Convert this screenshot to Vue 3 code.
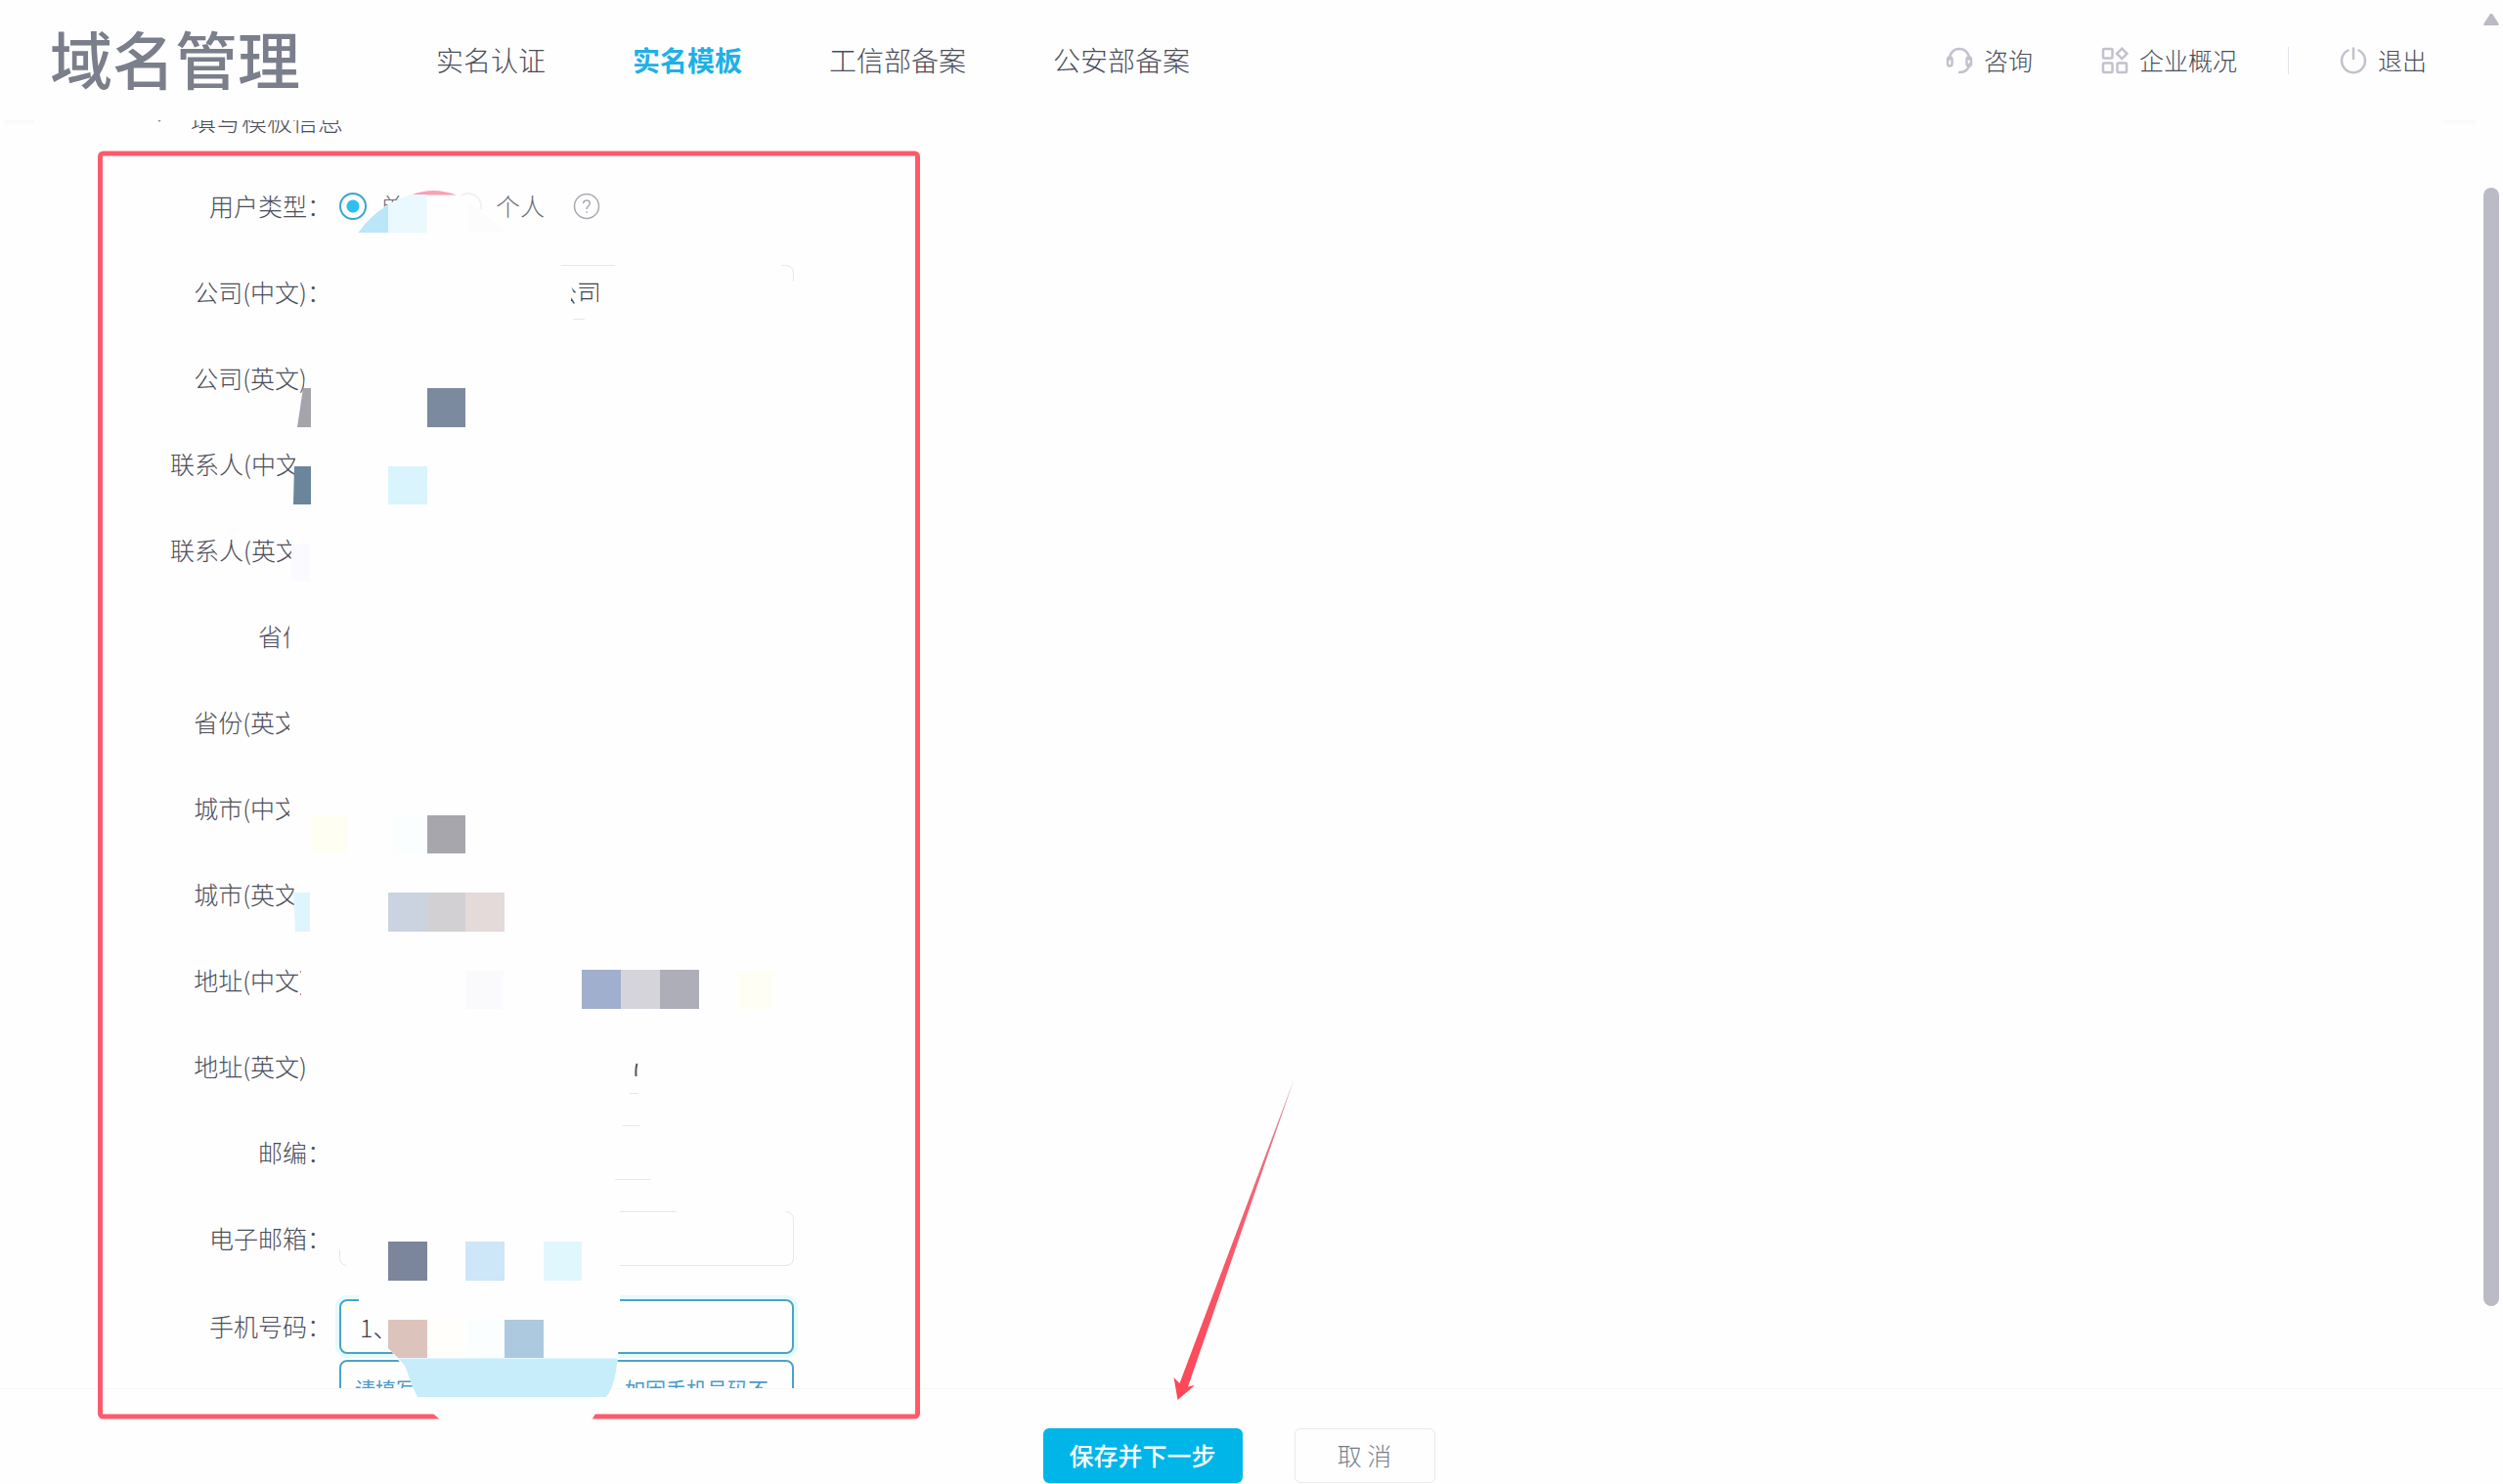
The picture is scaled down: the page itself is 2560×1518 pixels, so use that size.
<template>
  <div class="page">
    <!-- 顶部导航 -->
    <header class="header">
      <h1 class="logo">域名管理</h1>
      <nav class="nav">
        <a
          v-for="item in navs"
          :key="item"
          href="#"
          :class="['nav-item', { active: activeNav === item }]"
          @click.prevent="activeNav = item"
        >{{ item }}</a>
      </nav>
      <div class="tools">
        <a href="#" class="tool">
          <svg class="tool-icon" viewBox="0 0 28 28">
            <path d="M4 12.500C4 6 8.500 2 14 2s10 4 10 10.500M24.500 17.500C23.500 22.500 20 26 14 26" />
            <rect x="2" y="10.500" width="4.500" height="9" rx="2.250" />
            <rect x="21.500" y="10.500" width="4.500" height="9" rx="2.250" />
          </svg>
          <span>咨询</span>
        </a>
        <a href="#" class="tool">
          <svg class="tool-icon" viewBox="0 0 28 28">
            <rect x="2" y="2" width="9.500" height="9.500" rx="1" />
            <rect x="2" y="16.500" width="9.500" height="9.500" rx="1" />
            <rect x="16.500" y="16.500" width="9.500" height="9.500" rx="1" />
            <path d="M21.250 1.700l5.200 5.200-5.200 5.200-5.200-5.200z" />
          </svg>
          <span>企业概况</span>
        </a>
        <span class="divider"></span>
        <a href="#" class="tool">
          <svg class="tool-icon" viewBox="0 0 28 28">
            <path d="M14 1.500v10.500M8.500 3.500a12 12 0 1 0 11 0" />
          </svg>
          <span>退出</span>
        </a>
      </div>
    </header>

    <!-- 表单区域 -->
    <main class="content">
      <h2 class="section-title">
        <svg class="arrow-down" viewBox="0 0 10 6"><path d="M1 0h8L5 5z" /></svg>
        填写模板信息
      </h2>
      <form id="template-form" class="form" @submit.prevent>
        <div class="row">
          <span id="user-type" class="label">用户类型：</span>
          <div class="radios" role="radiogroup" aria-labelledby="user-type">
            <label class="radio">
              <input v-model="userType" type="radio" name="type" value="unit" />
              <span class="radio-text">单位</span>
            </label>
            <label class="radio">
              <input v-model="userType" type="radio" name="type" value="person" />
              <span class="radio-text">个人</span>
            </label>
            <svg class="help" viewBox="0 0 28 28">
              <circle cx="14" cy="14" r="12.500" />
              <path d="M10.700 11.300c0-2 1.400-3.300 3.300-3.300s3.300 1.300 3.300 3.100c0 2.600-3.300 2.900-3.300 5.900M14 19.200v1.600" />
            </svg>
          </div>
        </div>
        <div
          v-for="field in fields"
          :key="field.key"
          :class="['row', { 'row-focus': field.key === 'mobile' }]"
        >
          <label class="label" :for="field.key">{{ field.label }}：</label>
          <input
            :id="field.key"
            v-model="field.value"
            type="text"
            :class="['input', field.key]"
          />
        </div>
        <div class="tip">
          <span>请填写</span>
          <span>如因手机号码不</span>
        </div>
      </form>
    </main>

    <footer class="footer">
      <button type="submit" form="template-form" class="btn btn-primary">保存并下一步</button>
      <button type="button" class="btn btn-default">取 消</button>
    </footer>

    <!-- 滚动条 -->
    <div class="scrollbar">
      <svg class="scroll-up" viewBox="0 0 16 12"><path d="M8 0c1 0 1.500.5 2 1.500l5.500 8.500c.8 1.200 0 2-1 2h-13c-1 0-1.800-.8-1-2L6 1.500C6.500.5 7 0 8 0z" /></svg>
      <div class="scroll-thumb"></div>
    </div>

    <!-- 标注层：马赛克、红框、箭头 -->
    <svg class="marks" width="1600" height="1518" viewBox="0 0 1600 1518">
      <rect x="102.500" y="157" width="836" height="1292" rx="3" fill="none" stroke="#ff5a6c" stroke-width="5" />
      <path class="cover" fill-rule="evenodd" :d="coverPath" />
      <path d="M420 199.500Q443 190.500 467 199.500z" fill="#f7a3b3" />
      <path d="M366.500 238Q378 221 397 209.500V238z" fill="#bbe5f9" />
      <path d="M397 209.500Q408 203 420 199H436.500V238H397z" fill="#e9f9fe" />
      <path d="M478 206L493 218L515 234V238H478z" fill="#fcfcfc" />
      <polygon
        v-for="(block, i) in blocks"
        :key="i"
        :points="block.points"
        :fill="block.color"
      />
      <path d="M407 1389.500H631.500C630 1408 627 1420 620 1429H427Q420 1416 416 1402Q414 1395 407 1389.500z" fill="#c7edfb" />
      <path d="M651.500 1088Q650 1093 650.500 1101" fill="none" stroke="#555" stroke-width="2" />
      <path d="M1323.500 1104L1206.500 1415L1200.500 1409L1204.500 1432L1222 1417L1215 1418.500z" fill="url(#arrow-fill)" />
      <defs>
        <linearGradient id="arrow-fill" x1="0" y1="0" x2="0" y2="1">
          <stop offset="0" stop-color="#d98c9c" />
          <stop offset="0.4" stop-color="#f65f72" />
          <stop offset="1" stop-color="#ff4656" />
        </linearGradient>
      </defs>
    </svg>
  </div>
</template>

<script setup>
import { ref } from 'vue'

const navs = ['实名认证', '实名模板', '工信部备案', '公安部备案']
const activeNav = ref('实名模板')
const userType = ref('unit')

const fields = ref([
  { key: 'company', label: '公司(中文)', value: '公司' },
  { key: 'company-en', label: '公司(英文)', value: '' },
  { key: 'contact', label: '联系人(中文)', value: '' },
  { key: 'contact-en', label: '联系人(英文)', value: '' },
  { key: 'province', label: '省份', value: '' },
  { key: 'province-en', label: '省份(英文)', value: '' },
  { key: 'city', label: '城市(中文)', value: '' },
  { key: 'city-en', label: '城市(英文)', value: '' },
  { key: 'address', label: '地址(中文)', value: '' },
  { key: 'address-en', label: '地址(英文)', value: '' },
  { key: 'postcode', label: '邮编', value: '' },
  { key: 'email', label: '电子邮箱', value: '' },
  { key: 'mobile', label: '手机号码', value: '1、' }
])

// 涂抹区域外轮廓，后面几段是镂空部分
const coverPath = [
  'M366 238Q386 209 421 199H470L484 206L493 216L515 234L830 245V1237H804V1247H692V1237H634V1340L632 1388L629 1412L620 1429L609 1446L605 1453H451L443 1446L427 1429L418 1404L403 1386L397 1378L388 1366V1345H367V1322L354 1304V1279L342 1278H328V1140L317 1110V1070L308 1030V990L301 950V915L296 850V620L298 560L301 520L302 470L304 437L311 395L314 370L328 345V245z',
  'M574 262H629V276H574z',
  'M800 262H820V288H800z',
  'M581 283L614 283L612 293V309H592L588 312H584V304H588z',
  'M586 320H598V331H586z',
  'M644 1115H653V1126H644z',
  'M637 1148H654V1158H637z',
  'M629 1203H665V1214H629z'
].join('')

const rect = (x1, x2, y1, y2, color) => ({
  points: `${x1},${y1} ${x2},${y1} ${x2},${y2} ${x1},${y2}`,
  color
})

// 马赛克色块
const blocks = [
  { points: '310,397 318,397 318,437 304,437', color: '#a6a4ab' },
  rect(437, 476, 397, 437, '#7c8aa0'),
  { points: '301,477 318,477 318,516 300,516', color: '#6b869b' },
  rect(397, 437, 477, 516, '#d9f4fc'),
  rect(298, 317, 556, 595, '#fbfafe'),
  rect(318, 356, 834, 873, '#fffef3'),
  rect(402, 437, 834, 873, '#fafeff'),
  rect(437, 476, 834, 873, '#a8a6ad'),
  { points: '300,913 317,913 317,953 302,953', color: '#dff5fd' },
  rect(397, 437, 913, 953, '#cbd3e0'),
  rect(437, 476, 913, 953, '#d3d0d4'),
  rect(476, 516, 913, 953, '#e3dad9'),
  rect(477, 515, 993, 1032, '#fafafd'),
  rect(595, 635, 992, 1032, '#a1afce'),
  rect(635, 675, 992, 1032, '#d4d4da'),
  rect(675, 715, 992, 1032, '#aeaeb8'),
  rect(755, 792, 993, 1032, '#fffef5'),
  rect(397, 437, 1270, 1310, '#7b869c'),
  rect(476, 516, 1270, 1310, '#cde6f8'),
  rect(556, 595, 1270, 1310, '#dff7fd'),
  { points: '397,1350 437,1350 437,1389 407,1389 397,1379', color: '#dcc4bc' },
  rect(437, 476, 1350, 1389, '#fffefa'),
  rect(477, 516, 1350, 1389, '#fafeff'),
  rect(516, 556, 1350, 1389, '#adc9df')
]
</script>

<style>
body {
  margin: 0;
  background: #fefefe;
}
</style>

<style scoped>
.page {
  position: relative;
  display: flex;
  flex-direction: column;
  height: 100vh;
  overflow: hidden;
  background: #fefefe;
  color: #4b4d5a;
  font-family: "Noto Sans CJK SC", sans-serif;
  font-size: 25px;
  font-weight: 300;
}

.header {
  display: flex;
  align-items: center;
  flex-shrink: 0;
  height: 123px;
  padding: 0 78px 0 51px;
  box-sizing: border-box;
}

.logo {
  margin: 0 139px 0 0;
  padding-bottom: 8px;
  color: #7b7e8b;
  font-size: 64px;
  font-weight: 500;
  line-height: 64px;
}

.nav {
  display: flex;
  gap: 89px;
  padding-bottom: 2px;
}

.nav-item {
  color: #4b4d5a;
  font-size: 28px;
  text-decoration: none;
}

.nav-item.active {
  color: #1fb0e6;
  font-weight: 700;
}

.tools {
  display: flex;
  align-items: center;
  margin-left: auto;
}

.tool {
  display: flex;
  align-items: center;
  gap: 11px;
  color: #4b4d5a;
  text-decoration: none;
}

.tool span {
  padding-bottom: 2px;
}

.tool + .tool {
  margin-left: 70px;
}

.tool-icon {
  width: 28px;
  height: 28px;
  fill: none;
  stroke: #c2c2cd;
  stroke-width: 2.5;
  stroke-linecap: round;
}

.divider {
  width: 1px;
  height: 28px;
  margin: 0 52px;
  background: #e3e3e9;
}

.content {
  flex: 1;
  min-height: 0;
  overflow: hidden;
  background:
    linear-gradient(#f8f8fd, #fefefe) left 4px top / 31px 6px no-repeat,
    linear-gradient(#f8f8fd, #fefefe) right 28px top / 33px 6px no-repeat;
}

.section-title {
  display: flex;
  align-items: center;
  gap: 27px;
  margin: -13px 0 0 158px;
  font-size: 26px;
  font-weight: 300;
  line-height: 26px;
}

.arrow-down {
  width: 10px;
  height: 6px;
  fill: #8a8c99;
}

.form {
  padding: 47px 0 0 174px;
}

.row {
  display: flex;
  align-items: center;
  gap: 8px;
  height: 56px;
  margin-bottom: 32px;
}

.row-focus {
  margin-top: 34px;
}

.label {
  width: 165px;
  padding-bottom: 2px;
  text-align: right;
  white-space: nowrap;
}

.radios {
  display: flex;
  align-items: center;
  gap: 26px;
}

.radio {
  display: flex;
  align-items: center;
  gap: 14px;
  color: #6b6d79;
}

.radio-text {
  padding-bottom: 2px;
}

.radio input {
  width: 28px;
  height: 28px;
  margin: 0;
  border: 2px solid #f1f1f4;
  border-radius: 50%;
  appearance: none;
}

.radio input:checked {
  border-color: #3ba5cf;
  background: radial-gradient(circle, #2fbfee 6px, transparent 7px);
}

.help {
  width: 28px;
  height: 28px;
  margin-left: 3px;
  fill: none;
  stroke: #a9a9b5;
  stroke-width: 1.5;
}

.input {
  width: 465px;
  height: 56px;
  padding: 0 20px 2px;
  border: 1px solid #e6e6ee;
  border-radius: 8px;
  box-sizing: border-box;
  background: transparent;
  color: #3e404c;
  font: inherit;
  outline: none;
}

.input.company {
  padding-left: 217px;
}

.row-focus .input {
  padding: 0 19px;
  border: 2px solid #4aa3cb;
  box-shadow: 0 0 0 4px #e4fbfc;
}

.row:has(+ .row-focus) {
  margin-bottom: 0;
}

.tip {
  display: flex;
  justify-content: space-between;
  width: 465px;
  height: 64px;
  margin: -26px 0 0 173px;
  padding: 12px 24px 0 14px;
  border: 2px solid #4aa3cb;
  border-radius: 8px;
  box-sizing: border-box;
  color: #4a9bcb;
  font-size: 21px;
  font-weight: 400;
}

.footer {
  display: flex;
  justify-content: center;
  align-items: flex-start;
  gap: 53px;
  flex-shrink: 0;
  padding: 40px 26px 1px 0;
  border-top: 1px solid #f7f7f9;
}

.btn {
  height: 56px;
  padding: 0 0 2px;
  border-radius: 6px;
  font-family: inherit;
  font-size: 25px;
  cursor: pointer;
}

.btn-primary {
  width: 204px;
  border: none;
  background: #00b5e8;
  color: #fff;
  font-weight: 500;
}

.btn-default {
  width: 144px;
  border: 1px solid #e9e9f0;
  background: #fefefe;
  color: #7a7c88;
  font-weight: 300;
}

.scrollbar {
  position: absolute;
  top: 14px;
  right: 4px;
  bottom: 182px;
  display: flex;
  flex-direction: column;
  gap: 166px;
  width: 16px;
}

.scroll-up {
  flex-shrink: 0;
  width: 16px;
  height: 12px;
  fill: #bbbbc5;
}

.scroll-thumb {
  flex: 1;
  border-radius: 8px;
  background: #bbbbc5;
}

.marks {
  position: absolute;
  top: 0;
  left: 0;
  pointer-events: none;
}

.cover {
  fill: #fefefe;
}
</style>
